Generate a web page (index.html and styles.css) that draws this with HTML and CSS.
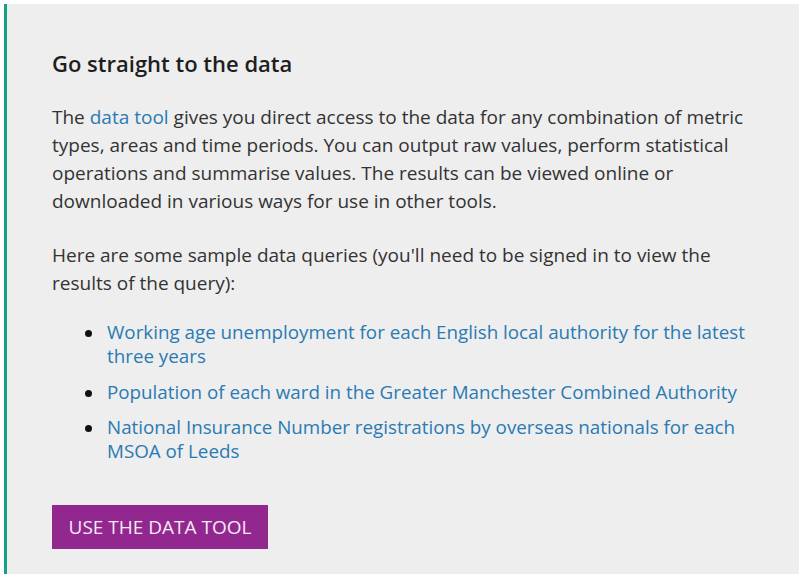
FILE: index.html
```html
<!DOCTYPE html>
<html lang="en">
<head>
<meta charset="utf-8">
<title>Go straight to the data</title>
<link rel="stylesheet" href="styles.css">
</head>
<body>
<div class="page">
  <section class="panel">
    <h2 class="panel-title">Go straight to the data</h2>
    <p class="panel-text">The <a href="#" class="link">data tool</a> gives you direct access to the data for any combination of metric types, areas and time periods. You can output raw values, perform statistical operations and summarise values. The results can be viewed online or downloaded in various ways for use in other tools.</p>
    <p class="panel-text panel-text--second">Here are some sample data queries (you'll need to be signed in to view the results of the query):</p>
    <ul class="query-list">
      <li class="query-item"><a href="#" class="link">Working age unemployment for each English local authority for the latest three years</a></li>
      <li class="query-item"><a href="#" class="link">Population of each ward in the Greater Manchester Combined Authority</a></li>
      <li class="query-item"><a href="#" class="link">National Insurance Number registrations by overseas nationals for each MSOA of Leeds</a></li>
    </ul>
    <a href="#" class="btn">Use the data tool</a>
  </section>
</div>
</body>
</html>
```
FILE: styles.css
```css
html, body {
  margin: 0;
  padding: 0;
  background: #ffffff;
}

body {
  font-family: "Open Sans", "Noto Sans", sans-serif;
  color: #333333;
}

.page {
  padding: 4px 1px 0 4px;
  height: 574px;
  box-sizing: border-box;
  display: flex;
  flex-direction: column;
}

.panel {
  flex: 1;
  background: #eeeeee;
  border-left: 3px solid #16a184;
  padding: 44px 43px 0 45px;
  display: flex;
  flex-direction: column;
  align-items: flex-start;
}

.panel-title {
  margin: 0;
  font-size: 22px;
  line-height: 30px;
  font-weight: 600;
  color: #1e1e1e;
}

.panel-text {
  margin: 25px 0 0;
  font-size: 19px;
  line-height: 28px;
}

.panel-text--second {
  margin-top: 26px;
}

.link {
  color: #2a7ab3;
  text-decoration: none;
}

.query-list {
  list-style: none;
  margin: 23px 0 0;
  padding: 0 0 0 33px;
  font-size: 18.8px;
  line-height: 24px;
}

.query-item {
  display: flex;
  align-items: flex-start;
}

.query-item + .query-item {
  margin-top: 11.5px;
}

.query-item::before {
  content: "";
  flex: 0 0 7px;
  width: 7px;
  height: 7px;
  margin: 10px 15px 0 0;
  border-radius: 50%;
  background: #111111;
}

.btn {
  margin-top: 42px;
  display: inline-flex;
  align-items: center;
  justify-content: center;
  width: 216px;
  height: 44px;
  box-sizing: border-box;
  background: #92278f;
  color: #f7eaf6;
  font-size: 19px;
  text-transform: uppercase;
  text-decoration: none;
}
```
